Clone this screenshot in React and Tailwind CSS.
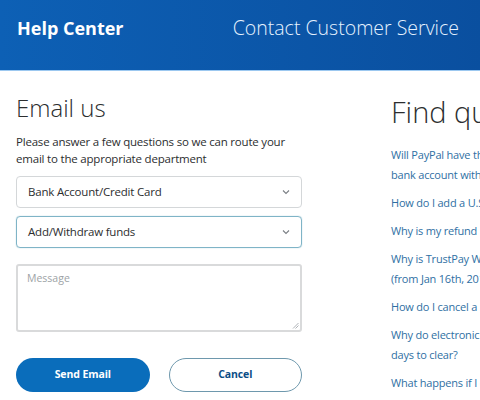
import React from 'react'

const ChevronDown = () => (
  <svg width="12" height="12" viewBox="0 0 12 12" fill="none" stroke="#7a7f84" strokeWidth="1.1">
    <path d="M3 4.5 L6 7.5 L9 4.5" />
  </svg>
)

const questions = [
  ['Will PayPal have the ability to add a', 'bank account without a routing number?'],
  ['How do I add a U.S. bank account?'],
  ['Why is my refund pending?'],
  ['Why is TrustPay Withdrawals unavailable', '(from Jan 16th, 2019)?'],
  ['How do I cancel a bank transfer?'],
  ['Why do electronic transfers take several', 'days to clear?'],
  ['What happens if I close my account?'],
]

const App = () => {
  return (
    <div className="w-[480px] h-[400px] overflow-hidden bg-white" style={{ fontFamily: '"Open Sans", "Noto Sans", sans-serif' }}>
      <div className="h-[71px] bg-gradient-to-r from-[#0d60b5] to-[#0a4f9f] border-b border-b-[#9cc8f0] flex items-start pt-[15px] pl-[17px] pr-[21px] justify-between">
        <div className="text-white font-bold text-[18px] leading-[26px]">Help Center</div>
        <div className="text-[#e6f2ff] text-[19.5px] leading-[26px] font-light">Contact Customer Service</div>
      </div>

      <div className="flex gap-[89px] pl-[16px]">
        <div className="w-[286px] shrink-0 flex flex-col">
          <h1 className="text-[24px] leading-[32px] font-light text-[#2c2e2f] mt-[21px]">Email us</h1>
          <p className="text-[11.5px] leading-[17px] tracking-[-0.2px] text-[#2c2e2f] mt-[9px]">
            Please answer a few questions so we can route your email to the appropriate department
          </p>
          <div className="mt-[9px] h-[32px] border border-[#d4d7d9] rounded-[4px] flex items-center justify-between pl-[11px] pr-[9px] text-[11.5px] tracking-[-0.2px] text-[#2c2e2f]">
            <span>Bank Account/Credit Card</span>
            <ChevronDown />
          </div>
          <div className="mt-[8px] h-[32px] border border-[#7fb4c7] rounded-[4px] flex items-center justify-between pl-[11px] pr-[9px] text-[11.5px] tracking-[-0.2px] text-[#2c2e2f] shadow-[0_0_1px_#7fb4c7]">
            <span>Add/Withdraw funds</span>
            <ChevronDown />
          </div>
          <div className="mt-[16px] h-[68px] border-2 border-[#d9dadb] rounded-[3px] px-[9px] pt-[2px] leading-[16px] relative">
            <span className="text-[10.5px] text-[#9da3a6]">Message</span>
            <svg className="absolute right-[1px] bottom-[1px]" width="7" height="7" viewBox="0 0 7 7" stroke="#9aa0a4" strokeWidth="0.8">
              <path d="M6.5 1 L1 6.5 M6.5 3.5 L3.5 6.5" />
            </svg>
          </div>
          <div className="mt-[26px] flex gap-[19px]">
            <button className="w-[134px] h-[34px] rounded-full bg-[#0a6dbb] text-white text-[10.5px] tracking-[-0.1px] font-bold">Send Email</button>
            <button className="w-[134px] h-[34px] rounded-full border border-[#6e98ad] text-[#0b4d86] text-[10.5px] tracking-[-0.1px] font-bold">Cancel</button>
          </div>
        </div>

        <div className="w-[300px] shrink-0 flex flex-col">
          <h2 className="text-[29px] leading-[38px] font-light text-[#2c2e2f] mt-[22px] whitespace-nowrap">Find quick answers</h2>
          <div className="mt-[14px] flex flex-col gap-[8px]">
            {questions.map((q, i) => (
              <div key={i} className="text-[11px] leading-[20px] tracking-[-0.2px] text-[#2f6fa3] whitespace-nowrap">
                {q.map((line, j) => (
                  <div key={j}>{line}</div>
                ))}
              </div>
            ))}
          </div>
        </div>
      </div>
    </div>
  )
}

export default App
